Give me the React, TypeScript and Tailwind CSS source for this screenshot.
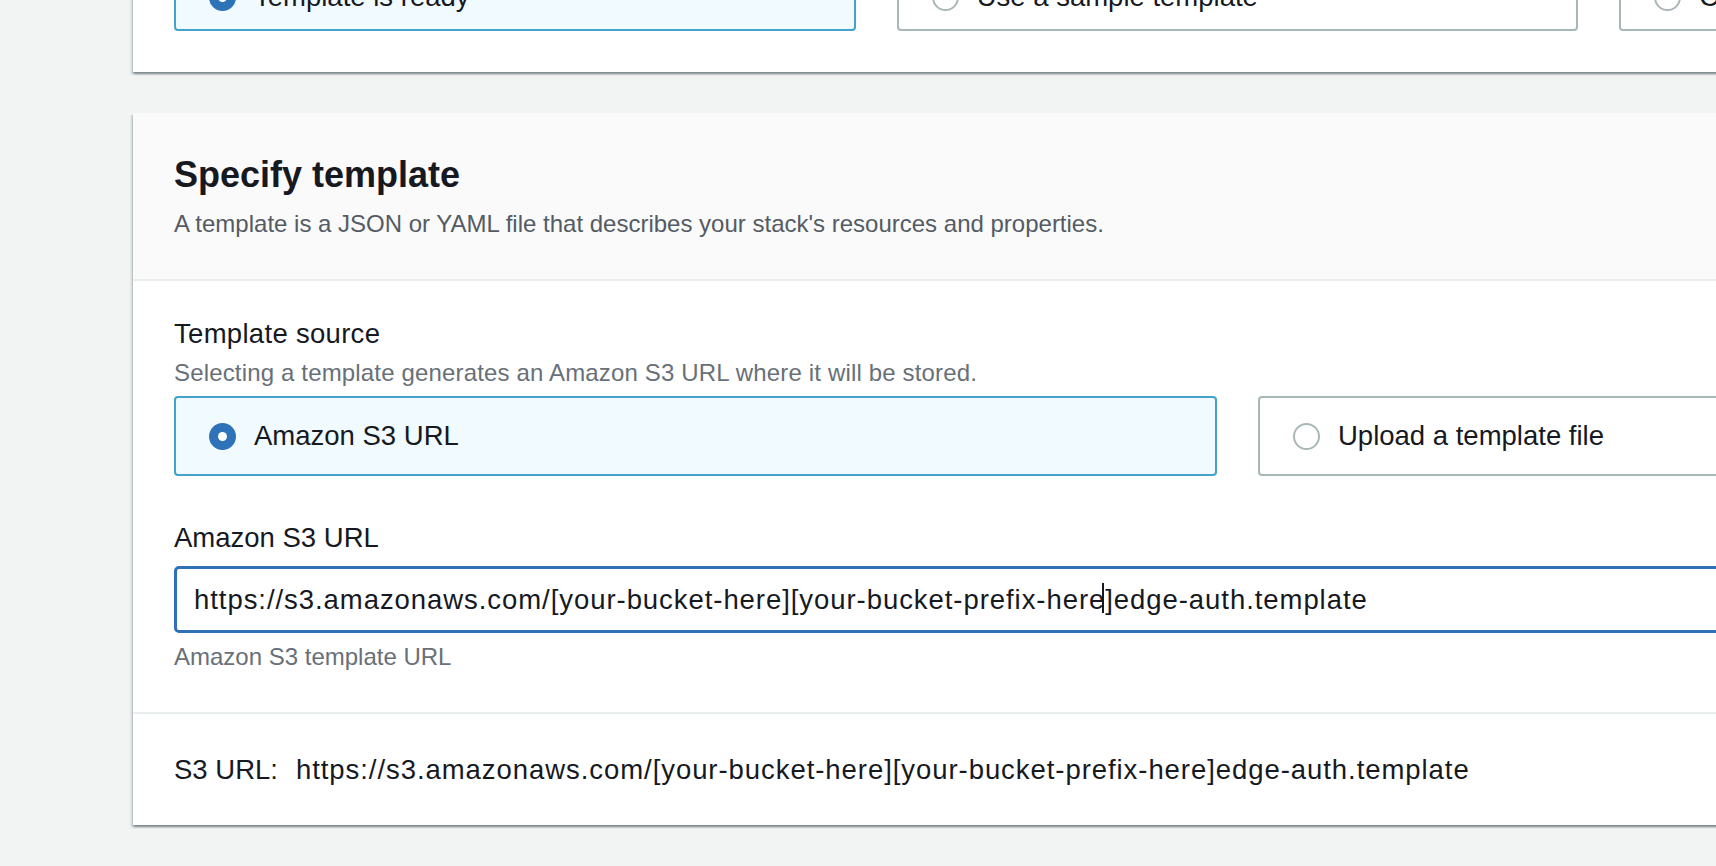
import React from "react";

type RadioTileProps = {
  label: string;
  selected?: boolean;
  className?: string;
};

function Radio({ selected }: { selected?: boolean }) {
  if (selected) {
    return (
      <span className="flex items-center justify-center w-[27px] h-[27px] rounded-full bg-[#2e73b8] shrink-0">
        <span className="w-[9px] h-[9px] rounded-full bg-white" />
      </span>
    );
  }
  return <span className="w-[27px] h-[27px] rounded-full border-2 border-[#aab7b8] bg-white shrink-0" />;
}

function RadioTile({ label, selected, className = "" }: RadioTileProps) {
  return (
    <div
      className={
        (selected
          ? "flex items-center h-[80px] pl-[33px] gap-[18px] rounded-[4px] border-2 border-[#44a3cc] bg-[#f1faff] "
          : "flex items-center h-[80px] pl-[33px] gap-[18px] rounded-[4px] border-2 border-[#aab7b8] bg-white ") + className
      }
    >
      <Radio selected={selected} />
      <span className="text-[27.5px] leading-[36px] text-[#16191f]">{label}</span>
    </div>
  );
}

const url = "https://s3.amazonaws.com/[your-bucket-here][your-bucket-prefix-here]edge-auth.template";

export default function App() {
  return (
    <div className="h-[866px] overflow-hidden bg-[#f2f3f3] font-['Liberation_Sans',Arial,sans-serif]">
      {/* Choose template panel, cut off at the top */}
      <div className="ml-[133px] w-[2209px] -mt-[49px] bg-white px-[41px] pb-[41px] shadow-[0_2px_2px_0_rgba(0,28,36,0.35),2px_2px_2px_0_rgba(0,28,36,0.12),-2px_2px_2px_0_rgba(0,28,36,0.12)]">
        <div className="grid grid-cols-3 gap-[41px]">
          <RadioTile label="Template is ready" selected className="pt-[12px]" />
          <RadioTile label="Use a sample template" className="pt-[12px]" />
          <RadioTile label="Create template in Designer" className="pt-[12px]" />
        </div>
      </div>

      {/* Specify template panel */}
      <div className="ml-[133px] w-[2209px] mt-[41px] bg-white shadow-[0_2px_2px_0_rgba(0,28,36,0.35),2px_2px_2px_0_rgba(0,28,36,0.12),-2px_2px_2px_0_rgba(0,28,36,0.12)]">
        <div className="bg-[#fafafa] border-b-2 border-[#eaeded] px-[41px] pt-[40px] pb-[39px]">
          <h2 className="text-[36px] leading-[44px] font-bold text-[#16191f]">Specify template</h2>
          <p className="mt-[11px] text-[24px] leading-[32px] text-[#545b64]">
            A template is a JSON or YAML file that describes your stack's resources and properties.
          </p>
        </div>

        <div className="px-[41px] pt-[35px] pb-[39px] border-b-2 border-[#eaeded]">
          <div className="text-[27.5px] leading-[36px] tracking-[0.3px] text-[#16191f]">Template source</div>
          <div className="mt-[5px] text-[24px] leading-[32px] tracking-[0.16px] text-[#687078]">
            Selecting a template generates an Amazon S3 URL where it will be stored.
          </div>
          <div className="mt-[7px] grid grid-cols-2 gap-[41px]">
            <RadioTile label="Amazon S3 URL" selected />
            <RadioTile label="Upload a template file" />
          </div>

          <div className="mt-[44px] text-[27.5px] leading-[36px] text-[#16191f]">Amazon S3 URL</div>
          <div className="mt-[10px] flex items-center h-[67px] pl-[17px] rounded-[5px] border-[3px] border-[#3070b5] bg-white">
            <span className="text-[27.5px] leading-[36px] tracking-[0.94px] text-[#16191f] whitespace-nowrap">
              https://s3.amazonaws.com/[your-bucket-here][your-bucket-prefix-here
              <span className="relative">
                <span className="absolute left-[-3px] top-[-1px] w-[1.5px] h-[30px] bg-[#16191f]" />
              </span>
              ]edge-auth.template
            </span>
          </div>
          <div className="mt-[8px] text-[24px] leading-[32px] text-[#687078]">Amazon S3 template URL</div>
        </div>

        <div className="px-[41px] pt-[38px] pb-[37px] flex gap-[18px] text-[27.5px] leading-[36px] text-[#16191f] whitespace-nowrap">
          <span>S3 URL:</span>
          <span className="tracking-[0.94px]">{url}</span>
        </div>
      </div>
    </div>
  );
}
